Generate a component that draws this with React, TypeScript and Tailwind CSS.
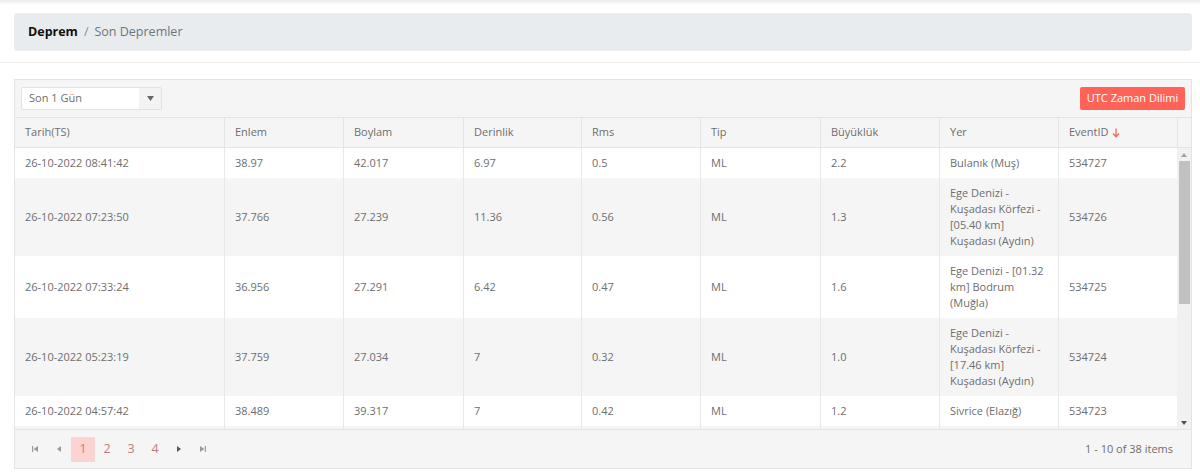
import React from "react";

const cols = [
  { key: "Tarih(TS)", w: "w-[209px]" },
  { key: "Enlem", w: "w-[119px]" },
  { key: "Boylam", w: "w-[120px]" },
  { key: "Derinlik", w: "w-[118px]" },
  { key: "Rms", w: "w-[119px]" },
  { key: "Tip", w: "w-[120px]" },
  { key: "Büyüklük", w: "w-[119px]" },
  { key: "Yer", w: "w-[119px]" },
  { key: "EventID", w: "w-[119px]" },
];

type Row = { cells: (string | string[])[] };

const rows: Row[] = [
  { cells: ["26-10-2022 08:41:42", "38.97", "42.017", "6.97", "0.5", "ML", "2.2", ["Bulanık (Muş)"], "534727"] },
  { cells: ["26-10-2022 07:23:50", "37.766", "27.239", "11.36", "0.56", "ML", "1.3", ["Ege Denizi -", "Kuşadası Körfezi -", "[05.40 km]", "Kuşadası (Aydın)"], "534726"] },
  { cells: ["26-10-2022 07:33:24", "36.956", "27.291", "6.42", "0.47", "ML", "1.6", ["Ege Denizi - [01.32", "km] Bodrum", "(Muğla)"], "534725"] },
  { cells: ["26-10-2022 05:23:19", "37.759", "27.034", "7", "0.32", "ML", "1.0", ["Ege Denizi -", "Kuşadası Körfezi -", "[17.46 km]", "Kuşadası (Aydın)"], "534724"] },
  { cells: ["26-10-2022 04:57:42", "38.489", "39.317", "7", "0.42", "ML", "1.2", ["Sivrice (Elazığ)"], "534723"] },
  { cells: ["", "", "", "", "", "", "", [""], ""] },
];

function Tri({ dir, bar }: { dir: "l" | "r"; bar?: boolean }) {
  return (
    <svg width="8" height="8" viewBox="0 0 8 8" className={bar || dir === "l" ? "text-[#9a9a9a]" : "text-[#555]"}>
      {dir === "l" ? (
        <>
          {bar && <rect x="1" y="1" width="1.2" height="6" fill="currentColor" />}
          <path d={bar ? "M7 1 L2.6 4 L7 7 Z" : "M6 1 L2 4 L6 7 Z"} fill="currentColor" />
        </>
      ) : (
        <>
          <path d={bar ? "M1 1 L5.4 4 L1 7 Z" : "M2 1 L6 4 L2 7 Z"} fill="currentColor" />
          {bar && <rect x="5.8" y="1" width="1.2" height="6" fill="currentColor" />}
        </>
      )}
    </svg>
  );
}

export default function App() {
  return (
    <div
      className="w-[1200px] h-[475px] bg-white overflow-hidden text-[#6e6e6e]"
      style={{ fontFamily: '"Open Sans", "Noto Sans", sans-serif' }}
    >
      <div className="h-[5px] bg-gradient-to-b from-[#ebebeb] to-white" />
      <div className="pl-[14px] pr-[8px] pt-[8px]">
        <div className="h-[38px] rounded-[4px] bg-[#e9ecef] flex items-center px-[14px] text-[12.5px]">
          <span className="font-bold text-[#111]">Deprem</span>
          <span className="mx-[6px] text-[#8a8f94]">/</span>
          <span className="text-[#6c757d]">Son Depremler</span>
        </div>
      </div>
      <div className="mt-[11px] border-t border-[#ececec]" />
      <div className="pl-[14px] pr-[8px] pt-[16px]">
        <div className="border border-[#e4e4e4] bg-[#f5f5f5] text-[11px]">
          {/* toolbar */}
          <div className="h-[37px] flex items-center justify-between px-[6px]">
            <div className="w-[141px] h-[23px] flex bg-white border border-[#e2e2e2] rounded-[2px]">
              <div className="flex-1 flex items-center pl-[7px]">Son 1 Gün</div>
              <div className="w-[22px] bg-[#f3f3f3] flex items-center justify-center">
                <svg width="7" height="5" viewBox="0 0 7 5">
                  <path d="M0 0 L7 0 L3.5 5 Z" fill="#666" />
                </svg>
              </div>
            </div>
            <button className="w-[105px] h-[23px] bg-[#ff6358] text-white rounded-[2px] text-[11px]">
              UTC Zaman Dilimi
            </button>
          </div>
          {/* header */}
          <div className="flex h-[31px] border-t border-b border-[#e4e4e4] bg-[#f5f5f5]">
            {cols.map((c, i) => (
              <div
                key={c.key}
                className={`${c.w} shrink-0 flex items-center px-[10px] ${i > 0 ? "border-l border-[#e4e4e4]" : ""}`}
              >
                {c.key}
                {c.key === "EventID" && (
                  <svg width="8" height="10" viewBox="0 0 8 10" className="ml-[3px]">
                    <path d="M4 0.5 V8.5 M1 5.5 L4 8.8 L7 5.5" stroke="#ff6358" strokeWidth="1.3" fill="none" />
                  </svg>
                )}
              </div>
            ))}
            <div className="flex-1 border-l border-[#e4e4e4]" />
          </div>
          {/* body */}
          <div className="flex h-[281px] overflow-hidden">
            <div className="w-[1162px] shrink-0 overflow-hidden">
              {rows.map((r, ri) => (
                <div key={ri} className={`flex ${ri % 2 === 1 ? "bg-[#f5f5f5]" : "bg-white"}`}>
                  {r.cells.map((cell, ci) => (
                    <div
                      key={ci}
                      className={`${cols[ci].w} shrink-0 flex items-center px-[10px] py-[7px] leading-[16px] ${ci > 0 ? "border-l border-[#e8e8e8]" : ""}`}
                    >
                      {Array.isArray(cell) ? (
                        <div className="whitespace-nowrap">
                          {cell.map((l, li) => (
                            <div key={li} className="h-[16px]">{l}</div>
                          ))}
                        </div>
                      ) : (
                        <div className="h-[16px]">{cell}</div>
                      )}
                    </div>
                  ))}
                </div>
              ))}
            </div>
            {/* scrollbar */}
            <div className="flex-1 bg-[#f1f1f1] flex flex-col items-center">
              <div className="h-[13px] flex items-center justify-center">
                <svg width="6" height="4" viewBox="0 0 6 4"><path d="M0 4 L3 0 L6 4 Z" fill="#a3a3a3" /></svg>
              </div>
              <div className="w-[11px] h-[143px] bg-[#c1c1c1]" />
              <div className="flex-1" />
              <div className="h-[13px] flex items-center justify-center">
                <svg width="6" height="4" viewBox="0 0 6 4"><path d="M0 0 L6 0 L3 4 Z" fill="#505050" /></svg>
              </div>
            </div>
          </div>
          {/* pager */}
          <div className="h-[39px] border-t border-[#e4e4e4] flex items-center justify-between pl-[8px] pr-[18px]">
            <div className="flex items-center text-[12.5px]">
              <div className="w-[24px] h-[24px] flex items-center justify-center"><Tri dir="l" bar /></div>
              <div className="w-[24px] h-[24px] flex items-center justify-center"><Tri dir="l" /></div>
              <div className="w-[24px] h-[25px] flex items-center justify-center bg-[#fbd3d0] text-[#e8736c]">1</div>
              <div className="w-[24px] h-[24px] flex items-center justify-center text-[#c27c78]">2</div>
              <div className="w-[24px] h-[24px] flex items-center justify-center text-[#c27c78]">3</div>
              <div className="w-[24px] h-[24px] flex items-center justify-center text-[#c27c78]">4</div>
              <div className="w-[24px] h-[24px] flex items-center justify-center"><Tri dir="r" /></div>
              <div className="w-[24px] h-[24px] flex items-center justify-center"><Tri dir="r" bar /></div>
            </div>
            <div className="text-[11px]">1 - 10 of 38 items</div>
          </div>
        </div>
      </div>
    </div>
  );
}
